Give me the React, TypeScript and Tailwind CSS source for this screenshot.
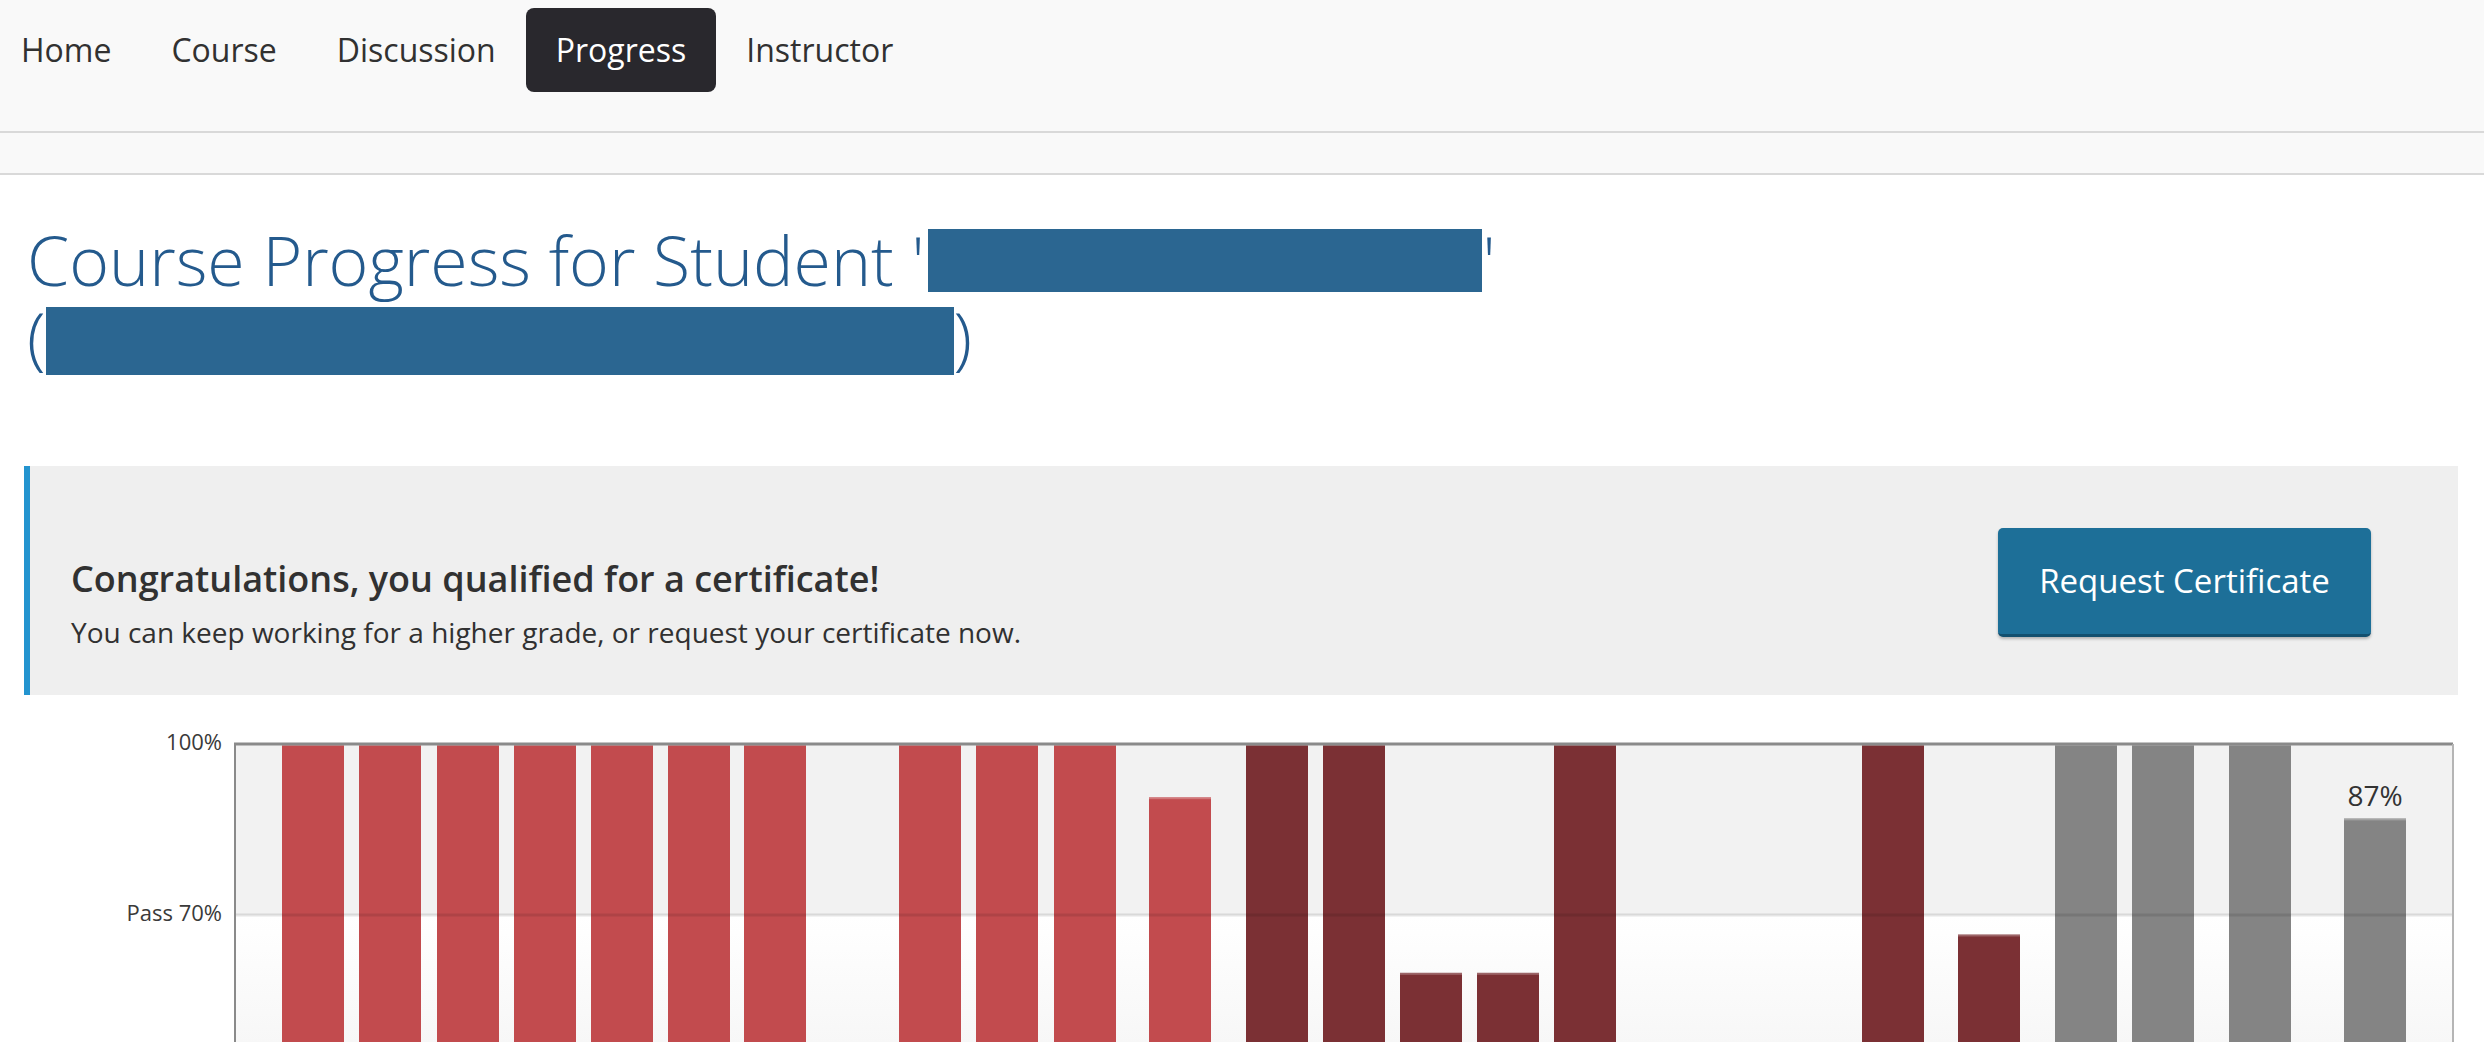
import React from "react";

type Bar = { x: number; v: number; c: string; label?: string };

const LIGHT = "#c24b4e";
const DARK = "#7b3034";
const GRAY = "#848484";

const bars: Bar[] = [
  { x: 282, v: 100, c: LIGHT },
  { x: 359, v: 100, c: LIGHT },
  { x: 437, v: 100, c: LIGHT },
  { x: 514, v: 100, c: LIGHT },
  { x: 591, v: 100, c: LIGHT },
  { x: 668, v: 100, c: LIGHT },
  { x: 744, v: 100, c: LIGHT },
  { x: 899, v: 100, c: LIGHT },
  { x: 976, v: 100, c: LIGHT },
  { x: 1054, v: 100, c: LIGHT },
  { x: 1149, v: 90.7, c: LIGHT },
  { x: 1246, v: 100, c: DARK },
  { x: 1323, v: 100, c: DARK },
  { x: 1400, v: 60, c: DARK },
  { x: 1477, v: 60, c: DARK },
  { x: 1554, v: 100, c: DARK },
  { x: 1862, v: 100, c: DARK },
  { x: 1958, v: 66.7, c: DARK },
  { x: 2055, v: 100, c: GRAY },
  { x: 2132, v: 100, c: GRAY },
  { x: 2229, v: 100, c: GRAY },
  { x: 2344, v: 87, c: GRAY, label: "87%" },
];

const TOP = 42;
const PASS = 213;
const ZERO = 614;
const UNIT = (ZERO - TOP) / 100;

function Chart() {
  return (
    <svg width="2484" height="640" viewBox="0 0 2484 640" className="block">
      <defs>
        <linearGradient id="lower" x1="0" y1="0" x2="0" y2="1">
          <stop offset="0" stopColor="#ffffff" />
          <stop offset="0.3" stopColor="#ffffff" />
          <stop offset="1" stopColor="#e6e6e6" />
        </linearGradient>
      </defs>
      <rect x={234} y={TOP} width={2219} height={ZERO - TOP} fill="url(#lower)" />
      <rect x={234} y={TOP} width={2219} height={PASS - TOP} fill="#f2f2f2" />
      {bars.map((b, i) => {
        const y = TOP + (100 - b.v) * UNIT;
        return (
          <g key={i}>
            <rect x={b.x} y={y} width={62} height={ZERO - y} fill={b.c} />
            <rect x={b.x} y={y} width={62} height={2} fill="#ffffff" opacity={0.25} />
            {b.label && (
              <text
                x={b.x + 31}
                y={y - 20}
                textAnchor="middle"
                dominantBaseline="middle"
                fontSize={28}
                fill="#333333"
                fontFamily="'Open Sans', sans-serif"
              >
                {b.label}
              </text>
            )}
          </g>
        );
      })}
      <line x1={234} y1={PASS} x2={2453} y2={PASS} stroke="#000" strokeOpacity={0.1} strokeWidth={3} />
      <line x1={234} y1={TOP} x2={2453} y2={TOP} stroke="#8a8a8a" strokeWidth={3} />
      <line x1={235} y1={TOP} x2={235} y2={ZERO} stroke="#8a8a8a" strokeWidth={2} />
      <line x1={2453} y1={TOP} x2={2453} y2={ZERO} stroke="#b5b5b5" strokeWidth={2} />
      <text
        x={222}
        y={TOP}
        textAnchor="end"
        dominantBaseline="middle"
        fontSize={22}
        fill="#3a3a3a"
        fontFamily="'Open Sans', sans-serif"
      >
        100%
      </text>
      <text
        x={222}
        y={PASS}
        textAnchor="end"
        dominantBaseline="middle"
        fontSize={22}
        fill="#3a3a3a"
        fontFamily="'Open Sans', sans-serif"
      >
        Pass 70%
      </text>
    </svg>
  );
}

export default function App() {
  const items = ["Home", "Course", "Discussion", "Progress", "Instructor"];
  return (
    <div className="min-h-screen bg-white font-['Open_Sans',sans-serif] overflow-hidden">
      <nav className="h-[133px] bg-[#f9f9f9] border-b-2 border-[#d9d9d9]">
        <ul className="flex pt-[8px]">
          {items.map((it, i) => (
            <li key={it}>
              <a
                className={
                  (it === "Progress"
                    ? "bg-[#29282d] text-white rounded-[8px] "
                    : "text-[#313131] ") +
                  (i === 0 ? "pl-[21px] pr-[30px] " : "px-[30px] ") +
                  "h-[84px] flex items-center text-[32px]"
                }
              >
                {it}
              </a>
            </li>
          ))}
        </ul>
      </nav>
      <div className="h-[42px] bg-[#f9f9f9] border-b-2 border-[#d9d9d9]" />

      <h1 className="mt-[47px] px-[27px] text-[68px] font-light leading-[76px] text-[#245a8d]">
        Course Progress for Student '
        <span className="inline-block ml-[4px] w-[554px] h-[63px] bg-[#2b6691] align-[-6px]" />
        '
        <br />(
        <span className="inline-block w-[908px] h-[68px] bg-[#2b6691] align-[-13px]" />)
      </h1>

      <div className="mt-[91px] ml-[24px] mr-[26px] h-[229px] border-l-[6px] border-[#2394cf] bg-[#efefef] flex items-start justify-between pl-[41px] pr-[87px]">
        <div className="pt-[93px]">
          <div className="text-[36px] leading-[40px] font-semibold text-[#313131]">
            Congratulations, you qualified for a certificate!
          </div>
          <div className="mt-[14px] text-[28px] leading-[38px] text-[#313131]">
            You can keep working for a higher grade, or request your certificate now.
          </div>
        </div>
        <button className="mt-[62px] w-[373px] h-[109px] bg-[#1d6f98] border-b-[3px] border-[#13506f] rounded-[5px] shadow-[0_2px_3px_rgba(0,0,0,0.25)] text-white text-[33px] flex items-center justify-center">
          Request Certificate
        </button>
      </div>

      <div className="mt-[7px]">
        <Chart />
      </div>
    </div>
  );
}
